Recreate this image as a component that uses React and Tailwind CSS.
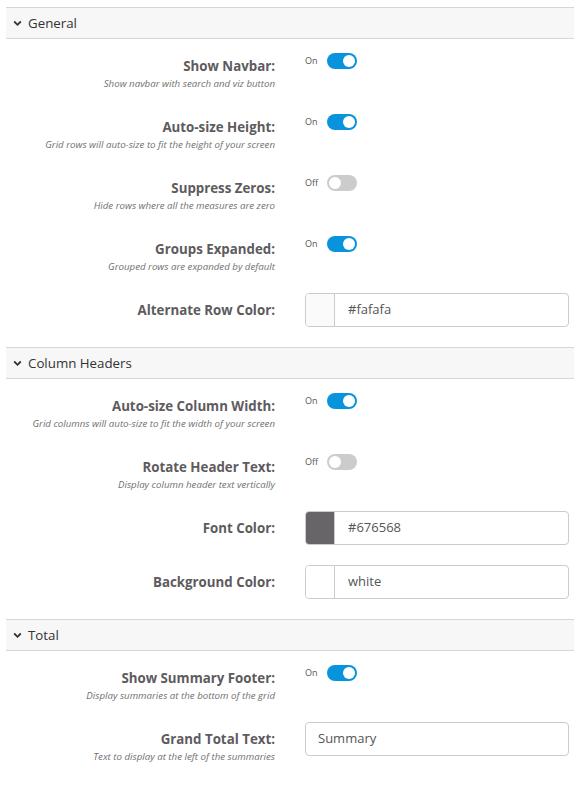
import React from "react";

const font = { fontFamily: '"Open Sans", "Noto Sans", sans-serif' };

function Chevron() {
  return (
    <svg width="9" height="7" viewBox="0 0 9 7" className="mr-[6px]">
      <polyline points="1.2,1.5 4.5,4.8 7.8,1.5" fill="none" stroke="#333" strokeWidth="1.8" />
    </svg>
  );
}

function Header({ title }) {
  return (
    <div className="flex items-center h-[32px] border-y border-[#d6d6d6] bg-[#f7f7f7] pl-[7px]">
      <Chevron />
      <span className="text-[13.3px] text-[#333333] leading-[18px]">{title}</span>
    </div>
  );
}

function Label({ label, desc }) {
  return (
    <div className="w-[269px] shrink-0 pt-[18px] text-right">
      <div className="text-[13.3px] leading-[18px] font-bold text-[#5d5b5e]">{label}</div>
      {desc && <div className="mt-[2px] text-[9.7px] leading-[14px] italic text-[#707070]">{desc}</div>}
    </div>
  );
}

function Toggle({ on }) {
  return (
    <div className="flex items-center pt-[14px]">
      <span className="w-[22px] text-[9px] leading-[12px] text-[#555555]">{on ? "On" : "Off"}</span>
      <div
        className={
          "relative w-[30px] h-[16px] rounded-full " + (on ? "bg-[#0894dc]" : "bg-[#cccccc]")
        }
      >
        <div
          className={
            "absolute top-[2px] w-[12px] h-[12px] rounded-full bg-white " + (on ? "right-[2px]" : "left-[2px]")
          }
        />
      </div>
    </div>
  );
}

function ToggleRow({ label, desc, on }) {
  return (
    <div className="flex h-[61px]">
      <Label label={label} desc={desc} />
      <div className="ml-[30px]">
        <Toggle on={on} />
      </div>
    </div>
  );
}

function InputRow({ label, desc, value, swatch }) {
  return (
    <div className="flex h-[54px]">
      <Label label={label} desc={desc} />
      <div className="ml-[30px] pt-[10px]">
        <div className="flex w-[264px] h-[34px] border border-[#cccccc] rounded-[4px] overflow-hidden bg-white">
          {swatch && (
            <div className="w-[29px] h-full border-r border-[#cccccc]" style={{ background: swatch }} />
          )}
          <div
            className={
              "flex items-center text-[13px] text-[#555555] " + (swatch ? "pl-[13px]" : "pl-[12px]")
            }
          >
            {value}
          </div>
        </div>
      </div>
    </div>
  );
}

export default function App() {
  return (
    <div className="w-[580px] h-[787px] bg-white pt-[7px] px-[6px]" style={font}>
      <Header title="General" />
      <ToggleRow label="Show Navbar:" desc="Show navbar with search and viz button" on />
      <ToggleRow label="Auto-size Height:" desc="Grid rows will auto-size to fit the height of your screen" on />
      <ToggleRow label="Suppress Zeros:" desc="Hide rows where all the measures are zero" on={false} />
      <ToggleRow label="Groups Expanded:" desc="Grouped rows are expanded by default" on />
      <InputRow label="Alternate Row Color:" value="#fafafa" swatch="#fafafa" />
      <div className="h-[10px]" />
      <Header title="Column Headers" />
      <ToggleRow label="Auto-size Column Width:" desc="Grid columns will auto-size to fit the width of your screen" on />
      <ToggleRow label="Rotate Header Text:" desc="Display column header text vertically" on={false} />
      <InputRow label="Font Color:" value="#676568" swatch="#676568" />
      <InputRow label="Background Color:" value="white" swatch="#ffffff" />
      <div className="h-[10px]" />
      <Header title="Total" />
      <ToggleRow label="Show Summary Footer:" desc="Display summaries at the bottom of the grid" on />
      <InputRow label="Grand Total Text:" desc="Text to display at the left of the summaries" value="Summary" />
    </div>
  );
}
